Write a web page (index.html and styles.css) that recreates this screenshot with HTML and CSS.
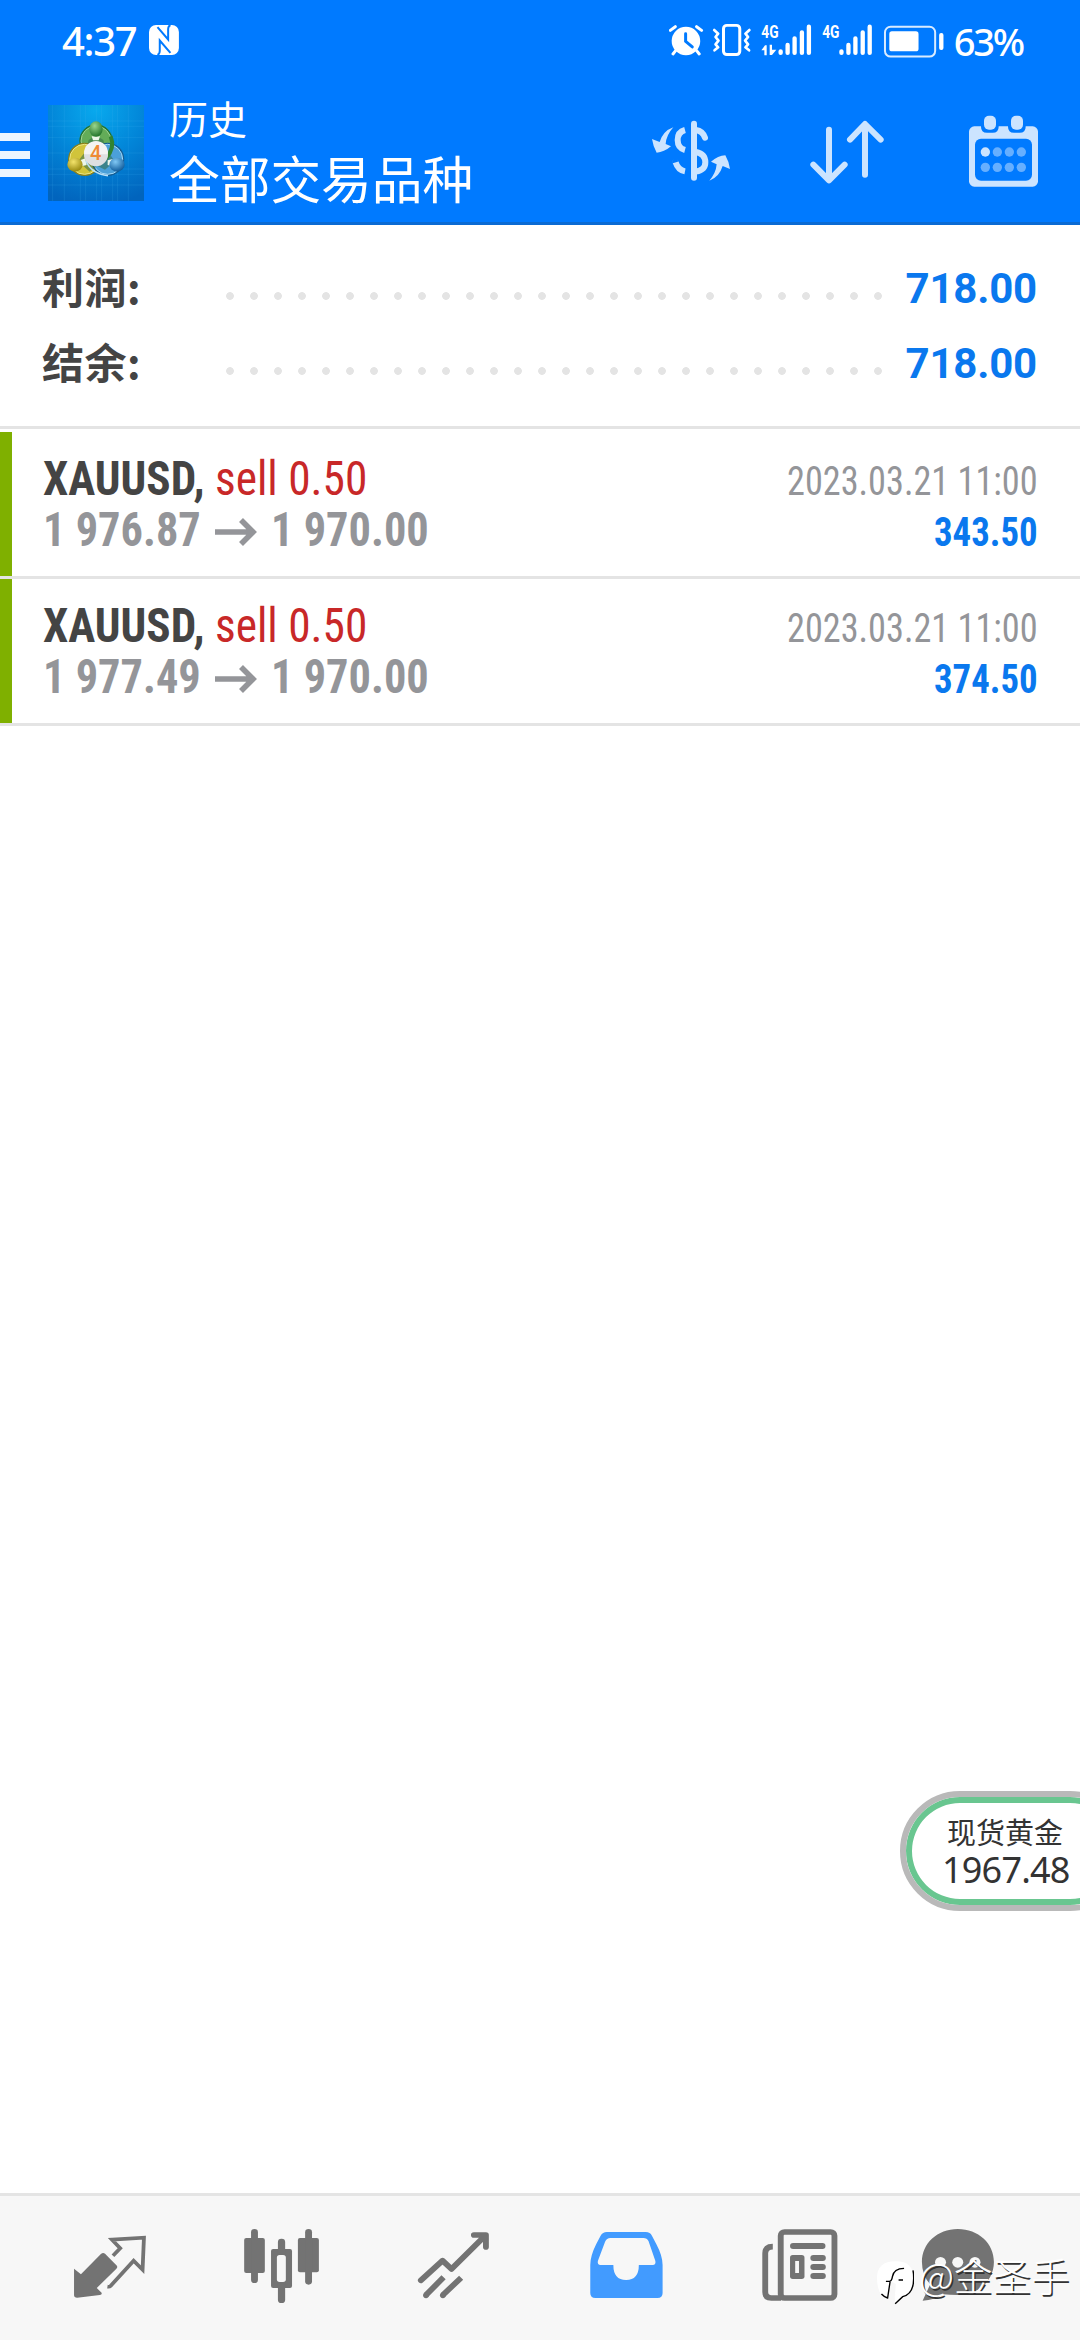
FILE: index.html
```html
<!DOCTYPE html>
<html lang="zh-CN">
<head>
<meta charset="utf-8">
<title>历史</title>
<link rel="stylesheet" href="styles.css">
</head>
<body>
<div class="screen">
  <header class="top">
    <div class="status">
      <span class="clock">4:37</span>
      <svg class="nfc" viewBox="0 0 30 30" width="30" height="30">
        <rect width="30" height="30" rx="7" fill="#fff"/>
        <path d="M8.500 2L19.200 14.500V4Q19.200 1 21.500 0M21.500 28L10.800 15.500V26Q10.800 29 8.500 30" fill="none" stroke="#007aff" stroke-width="2"/>
      </svg>
      <svg class="tray" viewBox="147 0 828 225" width="276" height="75">
        <g fill="#fff">
          <circle cx="198" cy="123" r="43"/>
          <path d="M151 91l15-11M245 91l-15-11M167 152l-8 10M230 152l8 10" stroke="#fff" stroke-width="9" stroke-linecap="round"/>
          <path d="M197 101v23l20 17" fill="none" stroke="#007aff" stroke-width="9" stroke-linecap="round"/>
          <rect x="311" y="76" width="49" height="88" rx="10" fill="none" stroke="#fff" stroke-width="9"/>
          <path d="M283 90l12 11-8 10 9 11-9 11 8 9-11 9M389 90l-12 11 8 10-9 11 9 11-8 9 11 9" fill="none" stroke="#fff" stroke-width="8" stroke-linejoin="round" stroke-linecap="round"/>
          <path d="M425 151l11-15h5v30h-7v-15zM450 134h7v15h13l-13 16h-7z"/>
        </g>
        <g fill="none" stroke="#fff" stroke-width="13" stroke-linecap="round">
          <path d="M483 154v5M504 135v24M525 115v44M547 97v62M568 80v79"/>
          <path d="M666 154v5M687 135v24M708 115v44M730 97v62M751 80v79"/>
        </g>
        <text class="net" x="425" y="115" textLength="52" lengthAdjust="spacingAndGlyphs">4G</text>
        <text class="net" x="608" y="115" textLength="52" lengthAdjust="spacingAndGlyphs">4G</text>
        <rect x="797" y="80" width="151" height="90" rx="17" fill="none" stroke="#d9ebff" stroke-width="6"/>
        <rect x="810" y="94" width="88" height="60" rx="8" fill="#fff"/>
        <rect x="960" y="99" width="13" height="51" rx="6" fill="#fff"/>
      </svg>
      <span class="percent">63%</span>
    </div>
    <div class="bar">
      <div class="menu"><i></i><i></i><i></i></div>
      <svg class="logo" viewBox="24 30 288 288" width="96" height="96">
        <defs>
          <radialGradient id="sky" cx=".5" cy=".05" r="1"><stop offset="0" stop-color="#08a9ee"/><stop offset=".5" stop-color="#0285d8"/><stop offset="1" stop-color="#0164bd"/></radialGradient>
          <radialGradient id="gr" cx=".4" cy=".3" r=".7"><stop offset="0" stop-color="#9bd68d"/><stop offset="1" stop-color="#25762c"/></radialGradient>
          <radialGradient id="ye" cx=".4" cy=".3" r=".7"><stop offset="0" stop-color="#f3e36b"/><stop offset="1" stop-color="#98890f"/></radialGradient>
          <radialGradient id="bl" cx=".4" cy=".3" r=".7"><stop offset="0" stop-color="#80c8f5"/><stop offset="1" stop-color="#115c9b"/></radialGradient>
        </defs>
        <rect x="24" y="30" width="288" height="288" fill="url(#sky)"/>
        <path d="M38 30v288M73 30v288M121 30v288M137 30v288M170 30v288M185 30v288M218 30v288M233 30v288M265 30v288M24 78h288M24 94h288M24 128h288M24 174h288M24 222h288M24 238h288M24 270h288" stroke="#49b7f2" stroke-opacity=".25" stroke-width="2"/>
        <circle cx="168" cy="138" r="50" fill="#24722e"/>
        <circle cx="168" cy="138" r="45" fill="#63ac58" stroke="#a2d598" stroke-width="3"/>
        <circle cx="134" cy="193" r="50" fill="#89801b"/>
        <circle cx="134" cy="193" r="45" fill="#d1c43b" stroke="#ece68a" stroke-width="3"/>
        <circle cx="203" cy="193" r="50" fill="#145d94"/>
        <circle cx="203" cy="193" r="45" fill="#4ba0d9" stroke="#a5d9f7" stroke-width="3"/>
        <path d="M146 135q22-20 44 0l10 35h-64zM105 210l28-36 36 42-20 14-20-18zM231 210l-22-34-38 36 24 12 14-12z" fill="#326b4a" opacity=".55"/>
        <path d="M155 124h25l-4 12h-17zM122 195l14-5 4 20-16 4zM203 196l15-4 0 22-15-4z" fill="#edf6e8"/>
        <path d="M138 198q16 38 66 44" fill="none" stroke="#b7e0f8" stroke-width="5"/>
        <path d="M212 124q14 34-14 66" fill="none" stroke="#318332" stroke-width="12"/>
        <ellipse cx="168" cy="102" rx="20" ry="23" fill="url(#gr)"/>
        <ellipse cx="105" cy="209" rx="23" ry="21" fill="url(#ye)"/>
        <ellipse cx="231" cy="209" rx="23" ry="21" fill="url(#bl)"/>
        <circle cx="168" cy="174" r="36" fill="#f4f3f3"/>
        <path d="M132 178a36 36 0 0 0 72 0z" fill="#dedfe1"/>
        <text class="four" x="150" y="195">4</text>
      </svg>
      <div class="titles">
        <div class="title">历史</div>
        <div class="subtitle">全部交易品种</div>
      </div>
      <svg class="actions" viewBox="90 340 1164 225" width="388" height="75">
        <g fill="#cce4ff">
          <path d="M157 383q-31 11-41 44l-23-9q3 21 14 41 22-1 43-19l-16-7q2-27 23-50z"/>
          <path d="M265 543q30-11 40-44l22 9q-3-22-14-41-22 1-43 19l17 8q-2 26-22 49z"/>
        </g>
        <g fill="none" stroke="#cce4ff" stroke-width="18" stroke-linecap="round">
          <path d="M219 372v162"/>
          <path d="M192 391Q170 397 170 421Q170 445 192 451M192 515Q171 511 164 488" stroke-linecap="butt"/>
          <circle cx="163" cy="488" r=".1"/>
          <path d="M225 391Q245 394 252 414" />
          <path d="M225 457Q253 463 253 488Q253 511 225 516" stroke-linecap="butt"/>
          <path d="M624 390v151M577 495l47 47 47-47M732 525v-151M687 420l45-47 47 47" stroke-linejoin="round"/>
        </g>
        <rect x="1044" y="380" width="207" height="181" rx="16" fill="#cce4ff"/>
        <rect x="1062" y="417" width="171" height="126" rx="18" fill="#007aff"/>
        <path d="M1080 375v6q0 18 18 18h17q18 0 18-18v-6zM1161 375v6q0 18 18 18h17q18 0 18-18v-6z" fill="#007aff"/>
        <rect x="1089" y="348" width="36" height="42" rx="15" fill="#cce4ff"/>
        <rect x="1170" y="348" width="36" height="42" rx="15" fill="#cce4ff"/>
        <circle cx="1093" cy="457" r="14" fill="#cce4ff"/>
        <g fill="#66afff"><circle cx="1129" cy="457" r="14"/><circle cx="1165" cy="457" r="14"/><circle cx="1201" cy="457" r="14"/><circle cx="1093" cy="503" r="14"/><circle cx="1129" cy="503" r="14"/><circle cx="1165" cy="503" r="14"/><circle cx="1201" cy="503" r="14"/></g>
      </svg>
    </div>
  </header>

  <section class="summary">
    <div class="sum"><span class="label">利润:</span><span class="dots"></span><span class="value">718.00</span></div>
    <div class="sum"><span class="label">结余:</span><span class="dots"></span><span class="value">718.00</span></div>
  </section>

  <main class="deals">
    <article class="deal">
      <div class="line"><span class="symbol">XAUUSD,</span><span class="side">sell 0.50</span><time class="time">2023.03.21 11:00</time></div>
      <div class="line"><span class="price">1 976.87</span><svg class="arrow" viewBox="0 0 42 28" width="42" height="28"><path d="M0 14h37M26 2l12 12-12 12" fill="none" stroke="#949599" stroke-width="5.600"/></svg><span class="price">1 970.00</span><span class="profit">343.50</span></div>
    </article>
    <article class="deal">
      <div class="line"><span class="symbol">XAUUSD,</span><span class="side">sell 0.50</span><time class="time">2023.03.21 11:00</time></div>
      <div class="line"><span class="price">1 977.49</span><svg class="arrow" viewBox="0 0 42 28" width="42" height="28"><path d="M0 14h37M26 2l12 12-12 12" fill="none" stroke="#949599" stroke-width="5.600"/></svg><span class="price">1 970.00</span><span class="profit">374.50</span></div>
    </article>
  </main>

  <nav class="tabs">
    <svg class="tab" viewBox="0 48 522.67 432" preserveAspectRatio="none">
      <path d="M215 266l20 17 58-61q6-6 12-1l33 35q5 5 0 10l-57 58 14 14q2 6-5 7l-66 8q-9 0-9-8z" fill="#737373"/>
      <path d="M328 227l21-22-24-26 93-6-4 96-26-27-67 76q-3 3-9 2" fill="none" stroke="#737373" stroke-width="11"/>
    </svg>
    <svg class="tab" viewBox="522.67 48 522.67 432" preserveAspectRatio="none">
      <g fill="#737373">
        <rect x="709" y="174" width="60" height="105" rx="6"/><rect x="729" y="147" width="20" height="162" rx="10"/>
        <rect x="865" y="174" width="61" height="103" rx="6"/><rect x="886" y="147" width="20" height="167" rx="10"/>
        <rect x="787" y="207" width="61" height="117" rx="6"/><rect x="807" y="176" width="21" height="193" rx="10"/>
      </g>
      <rect x="804" y="225" width="26" height="81" rx="8" fill="#f7f7f7"/>
    </svg>
    <svg class="tab" viewBox="1045.33 48 522.67 432" preserveAspectRatio="none">
      <g fill="none" stroke="#737373" stroke-width="17" stroke-linecap="round" stroke-linejoin="round">
        <path d="M1222 301l63-59 26 25 99-101M1376 165h35v36"/>
      </g>
      <g fill="none" stroke="#737373" stroke-width="17">
        <path d="M1237 345l51-53M1286 345l53-52"/>
      </g>
      <circle cx="1237" cy="346" r="8.500" fill="#737373"/><circle cx="1286" cy="346" r="8.500" fill="#737373"/>
    </svg>
    <svg class="tab" viewBox="0 48 522.67 432" preserveAspectRatio="none">
      <path d="M194 156h113q13 0 18 11l13 26q18 35 18 62v84q0 15-15 15H161q-15 0-15-15v-84q0-27 17-62l13-26q6-11 18-11z" fill="#429bff"/>
      <path d="M204 174h96q11 0 15 9l20 60q2 12-8 12h-40q0 45-37 45t-37-45h-37q-10 0-8-12l21-58q5-11 15-11z" fill="#f7f7f7"/>
    </svg>
    <svg class="tab" viewBox="522.67 48 522.67 432" preserveAspectRatio="none">
      <g fill="none" stroke="#737373" stroke-width="17">
        <rect x="699" y="156" width="156" height="198" rx="11"/>
        <path d="M676 200q-22 0-22 20v116q0 18 18 18h28"/>
      </g>
      <g fill="#737373"><rect x="726" y="189" width="103" height="18" rx="9"/><rect x="785" y="225" width="45" height="18" rx="9"/><rect x="785" y="252" width="45" height="18" rx="9"/><rect x="785" y="279" width="45" height="18" rx="9"/><rect x="726" y="225" width="42" height="72" rx="8"/></g>
      <rect x="741" y="243" width="11" height="36" fill="#f7f7f7"/>
    </svg>
    <svg class="tab" viewBox="1045.33 48 522.67 432" preserveAspectRatio="none">
      <path d="M1213 147c60 0 105 43 105 99s-45 99-105 99q-24 0-42-2-25 17-60 19l22-49q-24-27-24-67c0-56 45-99 104-99z" fill="#737373"/>
      <g fill="#f7f7f7"><circle cx="1163" cy="247" r="16"/><circle cx="1213" cy="247" r="16"/><circle cx="1263" cy="247" r="16"/></g>
    </svg>
  </nav>

  <div class="float"><span class="gold">现货黄金</span><span class="quote">1967.48</span></div>
  <div class="mark">
    <svg viewBox="978 236 108 138" width="37" height="46" preserveAspectRatio="none">
      <path d="M1034 243q50 0 50 50 0 50-31 55l-22 23-1-20 3-40-15-8-10 50q-30-7-30-60 0-50 54-50z" fill="#fff"/>
      <path d="M1083 270q2 8 2 24 0 47-32 55l-22 21M1004 303h11q6-1 8-14 4-25 34-25M1041 299h13M1016 305l-7 48q-10-3-18-12" fill="none" stroke="#000" stroke-width="4"/>
    </svg>
    <span>@金圣手</span>
  </div>
</div>
</body>
</html>
```
FILE: styles.css
```css
* { box-sizing: border-box; }
body { margin: 0; background: #fff; }
.screen {
  position: relative;
  width: 1080px;
  height: 2340px;
  overflow: hidden;
  display: flex;
  flex-direction: column;
  font-family: Roboto, "Noto Sans CJK SC", sans-serif;
}

.top { height: 225px; background: #007aff; border-bottom: 3px solid #0b6bd3; color: #fff; }
.status { height: 75px; display: flex; padding: 0 57px 0 62px; }
.clock, .percent { font-family: "Noto Sans", sans-serif; font-weight: 500; font-size: 40px; line-height: 82px; letter-spacing: -1.3px; white-space: nowrap; }
.clock { width: 87px; }
.nfc { margin-top: 25px; }
.tray { margin-left: 490px; }
.percent { font-size: 38px; margin-left: 10px; letter-spacing: -2.2px; }
.net { font: 700 54px Roboto, sans-serif; fill: #fff; }

.bar { height: 147px; display: flex; align-items: flex-start; }
.menu { width: 48px; padding-top: 58px; display: flex; flex-direction: column; gap: 10px; }
.menu i { width: 30px; height: 8px; background: #ebf5ff; }
.logo { margin-top: 30px; flex: none; }
.four { font: 500 60px Roboto, sans-serif; fill: #ef8a35; }
.titles { width: 507px; padding: 20px 0 0 25px; font-family: "Noto Sans CJK SC", sans-serif; white-space: nowrap; }
.title { font-size: 39px; line-height: 44px; }
.subtitle { margin-top: 8px; font-size: 50.7px; line-height: 60px; }
.actions { margin-top: 38px; }

.summary { height: 204px; padding: 23px 43px 0 42px; border-bottom: 3px solid #e4e4e4; }
.sum { height: 75px; display: flex; line-height: 75px; }
.label { width: 176px; font-family: "Noto Sans CJK SC", sans-serif; font-weight: 700; font-size: 42px; letter-spacing: .5px; color: #444; }
.dots { width: 672px; height: 24px; margin-top: 36px; background: radial-gradient(circle at 12px 12px, #e4e4e4 3.5px, transparent 4.2px) 0 0 / 24px 24px; }
.value { margin-left: auto; padding-top: 3px; font-weight: 700; font-size: 42px; letter-spacing: -.2px; color: #0a78ee; }

.deals { flex: 1; padding-top: 3px; }
.deal { height: 147px; padding: 21px 42px 0 43px; background: linear-gradient(#7fb000, #7fb000) 0 0 / 12px 144px no-repeat; border-bottom: 3px solid #e4e4e4; }
.line { height: 51px; display: flex; align-items: baseline; line-height: 51px; font-family: "Roboto Condensed", Roboto, sans-serif; font-stretch: 75%; font-size: 48px; white-space: pre; }
.line span, .line time { transform-origin: 0 50%; }
.symbol { width: 172px; font-weight: 700; color: #444; transform: scaleX(.94); }
.side { color: #c82828; transform: scaleX(.945); }
.price { width: 172px; font-weight: 700; color: #949599; transform: scaleX(.925); }
.arrow { margin: 0 14px 3px 0; }
.line .time, .line .profit { margin-left: auto; font-size: 40px; transform-origin: 100% 50%; }
.time { color: #949599; transform: scaleX(.906); }
.profit { font-weight: 700; color: #0a78ee; transform: scaleX(.92); }

.tabs { height: 147px; display: flex; background: #f7f7f7; border-top: 3px solid #e4e4e4; }
.tab { width: 180px; height: 144px; }

.float {
  position: absolute; left: 900px; top: 1791px; width: 230px; height: 120px;
  border: 6px solid #b9b9b9; border-radius: 60px; background: #fff;
  box-shadow: inset 0 0 0 6px #69c690;
  display: flex; flex-direction: column; padding: 17px 0 0 36px; color: #333;
}
.gold { padding-left: 5px; font: 29px/34px "Noto Sans CJK SC", sans-serif; }
.quote { padding-top: 3px; font: 36px/38px "Noto Sans", sans-serif; letter-spacing: -.8px; }

.mark { position: absolute; left: 877px; top: 2259px; display: flex; gap: 5px; color: #fff; }
.mark span { margin-top: -7px; font: 300 38.5px/44px "Noto Sans CJK SC", sans-serif; text-shadow: 1.5px 1.5px 0 #333; white-space: nowrap; }
```
